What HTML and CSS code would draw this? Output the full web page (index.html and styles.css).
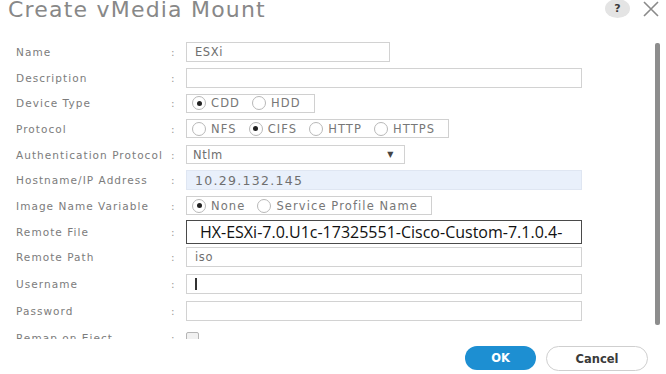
FILE: index.html
```html
<!DOCTYPE html>
<html lang="en">
<head>
    <meta charset="UTF-8">
    <title>Create vMedia Mount</title>
    <link rel="stylesheet" href="styles.css">
</head>
<body>
    <div class="dialog">
        <div class="dialog-header">
            <h1 class="dialog-title">Create vMedia Mount</h1>
            <div class="header-tools">
                <span class="help-icon">?</span>
                <svg class="close-icon" width="18" height="16" viewBox="0 0 18 16">
                    <path d="M2 1 L16 15 M16 1 L2 15" stroke="#8a8a8a" stroke-width="1.6" fill="none"/>
                </svg>
            </div>
        </div>

        <div class="dialog-body">
            <div class="form">
                <div class="form-row">
                    <label>Name</label><span class="colon">:</span>
                    <div class="field"><div class="input w-name">ESXi</div></div>
                </div>
                <div class="form-row">
                    <label>Description</label><span class="colon">:</span>
                    <div class="field"><div class="input w-full"></div></div>
                </div>
                <div class="form-row">
                    <label>Device Type</label><span class="colon">:</span>
                    <div class="field">
                        <div class="radio-group">
                            <span class="radio checked"></span><span class="opt">CDD</span>
                            <span class="radio"></span><span class="opt">HDD</span>
                        </div>
                    </div>
                </div>
                <div class="form-row">
                    <label>Protocol</label><span class="colon">:</span>
                    <div class="field">
                        <div class="radio-group">
                            <span class="radio"></span><span class="opt">NFS</span>
                            <span class="radio checked"></span><span class="opt">CIFS</span>
                            <span class="radio"></span><span class="opt">HTTP</span>
                            <span class="radio"></span><span class="opt">HTTPS</span>
                        </div>
                    </div>
                </div>
                <div class="form-row">
                    <label>Authentication Protocol</label><span class="colon">:</span>
                    <div class="field">
                        <div class="input select w-select">
                            <span>Ntlm</span>
                            <span class="arrow">&#9660;</span>
                        </div>
                    </div>
                </div>
                <div class="form-row">
                    <label>Hostname/IP Address</label><span class="colon">:</span>
                    <div class="field"><div class="input filled w-full">10.29.132.145</div></div>
                </div>
                <div class="form-row">
                    <label>Image Name Variable</label><span class="colon">:</span>
                    <div class="field">
                        <div class="radio-group">
                            <span class="radio checked"></span><span class="opt">None</span>
                            <span class="radio"></span><span class="opt">Service Profile Name</span>
                        </div>
                    </div>
                </div>
                <div class="form-row">
                    <label>Remote File</label><span class="colon">:</span>
                    <div class="field"><div class="input pasted w-full">HX-ESXi-7.0.U1c-17325551-Cisco-Custom-7.1.0.4-</div></div>
                </div>
                <div class="form-row">
                    <label>Remote Path</label><span class="colon">:</span>
                    <div class="field"><div class="input w-full">iso</div></div>
                </div>
                <div class="form-row tall">
                    <label>Username</label><span class="colon">:</span>
                    <div class="field"><div class="input w-full"><span class="caret"></span></div></div>
                </div>
                <div class="form-row tall">
                    <label>Password</label><span class="colon">:</span>
                    <div class="field"><div class="input w-full"></div></div>
                </div>
                <div class="form-row tall">
                    <label>Remap on Eject</label><span class="colon">:</span>
                    <div class="field"><span class="checkbox"></span></div>
                </div>
            </div>
            <div class="scrollbar"><div class="thumb"></div></div>
        </div>

        <div class="dialog-footer">
            <button class="btn btn-ok">OK</button>
            <button class="btn btn-cancel">Cancel</button>
        </div>
    </div>
</body>
</html>
```

FILE: styles.css
```css
/* General */
body {
    margin: 0;
    background-color: #ffffff;
    font-family: 'DejaVu Sans', 'Liberation Sans', sans-serif;
    color: #7a7a7a;
}

.dialog {
    width: 666px;
    height: 374px;
    overflow: hidden;
    display: flex;
    flex-direction: column;
}

/* Header */
.dialog-header {
    height: 39px;
    display: flex;
    justify-content: space-between;
    align-items: flex-start;
    padding: 0 6px 0 8px;
}

.dialog-title {
    margin: 0;
    font-size: 22px;
    font-weight: normal;
    letter-spacing: 1.2px;
    color: #888888;
    line-height: 20px;
}

.header-tools {
    display: flex;
    align-items: center;
    gap: 12px;
    margin-top: -1px;
}

.help-icon {
    width: 25px;
    height: 19px;
    border-radius: 50%;
    background-color: #e4e4e4;
    color: #3a3a3a;
    font-size: 11px;
    font-weight: bold;
    display: flex;
    align-items: center;
    justify-content: center;
}

.close-icon {
    display: block;
}

/* Body */
.dialog-body {
    height: 300px;
    display: flex;
    overflow: hidden;
}

.form {
    flex: 1;
    padding-left: 16px;
}

.form-row {
    height: 25.7px;
    display: grid;
    grid-template-columns: 155px 15px 1fr;
    align-items: center;
    font-size: 10.5px;
}

.form-row.tall {
    height: 27px;
}

.form-row label {
    color: #7c7c7c;
    letter-spacing: 1.05px;
    white-space: nowrap;
}

.colon {
    color: #999;
}

.field {
    display: flex;
    align-items: center;
}

.input {
    box-sizing: border-box;
    height: 20px;
    border: 1px solid #d2d2d2;
    padding: 0 8px;
    display: flex;
    align-items: center;
    font-size: 11.5px;
    letter-spacing: 0.6px;
    color: #6f6f6f;
    background-color: #ffffff;
}

.w-name { width: 204px; }
.w-full { width: 396px; }
.w-select { width: 219px; }

.select {
    justify-content: space-between;
    padding: 0 10px 0 6px;
    height: 19px;
}

.select .arrow {
    font-size: 8px;
    color: #444;
}

.input.filled {
    background-color: #e9f0fb;
    border-color: #dfe6f2;
    font-size: 12.5px;
    letter-spacing: 1.3px;
}

.input.pasted {
    height: 24px;
    border: 1px solid #4a4a4a;
    color: #111;
    font-family: 'Open Sans', 'Liberation Sans', sans-serif;
    font-size: 16px;
    letter-spacing: 0;
    padding-left: 13px;
}

.caret {
    width: 2px;
    height: 12px;
    background-color: #333;
}

/* Radio buttons */
.radio-group {
    box-sizing: border-box;
    height: 19px;
    border: 1px solid #d0d0d0;
    display: flex;
    align-items: center;
    padding: 0 13px 0 5px;
    font-size: 11.5px;
    letter-spacing: 1.1px;
    color: #777;
}

.radio {
    box-sizing: border-box;
    width: 14px;
    height: 14px;
    border: 1px solid #b8b8b8;
    border-radius: 50%;
    margin-right: 5px;
    display: flex;
    align-items: center;
    justify-content: center;
}

.radio.checked::after {
    content: '';
    width: 5px;
    height: 5px;
    border-radius: 50%;
    background-color: #222;
}

.opt {
    margin-right: 12px;
}

.opt:last-child {
    margin-right: 0;
}

.checkbox {
    box-sizing: border-box;
    width: 13px;
    height: 12px;
    border: 1px solid #b5b5b5;
    border-radius: 2px;
    background-color: #f1f1f1;
}

/* Scrollbar */
.scrollbar {
    width: 5px;
    margin-right: 6px;
    padding-top: 4px;
}

.thumb {
    height: 282px;
    background-color: #8d8d8d;
    border-radius: 2px;
}

/* Footer */
.dialog-footer {
    flex: 1;
    display: flex;
    justify-content: flex-end;
    align-items: flex-start;
    gap: 10px;
    padding: 7px 18px 0 0;
}

.btn {
    height: 24px;
    border-radius: 13px;
    font-family: 'DejaVu Sans', sans-serif;
    font-size: 11.5px;
    font-weight: bold;
    cursor: pointer;
}

.btn-ok {
    width: 71px;
    background-color: #1d8fd2;
    color: #ffffff;
    border: none;
}

.btn-cancel {
    width: 102px;
    height: 25px;
    background-color: #ffffff;
    color: #3a3a3a;
    border: 1px solid #cfcfcf;
}
```
